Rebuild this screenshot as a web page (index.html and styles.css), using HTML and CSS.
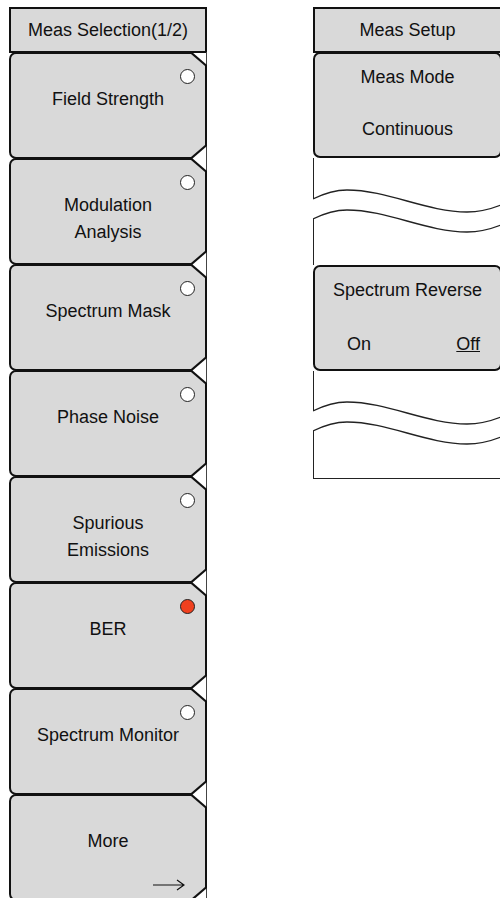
FILE: index.html
```html
<!DOCTYPE html>
<html lang="en">
<head>
    <meta charset="UTF-8">
    <meta name="viewport" content="width=device-width, initial-scale=1.0">
    <title>Meas Selection</title>
    <link rel="stylesheet" href="styles.css">
</head>
<body>
    <div class="screen">
        <div class="panel panel-left">
            <div class="menu-title">Meas Selection(1/2)</div>
            <div class="keys">
                <div class="key"><div class="key-face">Field Strength<span class="led"></span></div></div>
                <div class="key"><div class="key-face">Modulation<br>Analysis<span class="led"></span></div></div>
                <div class="key"><div class="key-face">Spectrum Mask<span class="led"></span></div></div>
                <div class="key"><div class="key-face">Phase Noise<span class="led"></span></div></div>
                <div class="key"><div class="key-face">Spurious<br>Emissions<span class="led"></span></div></div>
                <div class="key"><div class="key-face">BER<span class="led led-on"></span></div></div>
                <div class="key"><div class="key-face">Spectrum Monitor<span class="led"></span></div></div>
                <div class="key"><div class="key-face key-more">More
                    <svg class="more-arrow" width="32" height="12" viewBox="0 0 32 12">
                        <path d="M0 6H31M24 1L31 6L24 11" fill="none" stroke="#111" stroke-width="1.2"/>
                    </svg>
                </div></div>
            </div>
        </div>

        <div class="panel panel-right">
            <div class="menu-title">Meas Setup</div>
            <div class="setup-key setup-first">
                <div class="setup-label">Meas Mode</div>
                <div class="setup-value">Continuous</div>
            </div>
            <div class="gap-break">
                <svg width="188" height="107" viewBox="0 0 188 107">
                    <path d="M0.5 0V41M0.5 61V107" fill="none" stroke="#222" stroke-width="1"/>
                    <path d="M0 41C12 35 22 32 34 32C74 32 114 54 154 54C166 54 178 51 188 47" fill="none" stroke="#222" stroke-width="1.3"/>
                    <path d="M0 61C12 55 22 52 34 52C74 52 114 74 154 74C166 74 178 71 188 67" fill="none" stroke="#222" stroke-width="1.3"/>
                </svg>
            </div>
            <div class="setup-key">
                <div class="setup-label">Spectrum Reverse</div>
                <div class="setup-toggle">
                    <span>On</span>
                    <span class="selected">Off</span>
                </div>
            </div>
            <div class="gap-break gap-last">
                <svg width="188" height="107" viewBox="0 0 188 107">
                    <path d="M0.5 0V40M0.5 60V107" fill="none" stroke="#222" stroke-width="1"/>
                    <path d="M0 40C12 34 22 31 34 31C74 31 114 53 154 53C166 53 178 50 188 46" fill="none" stroke="#222" stroke-width="1.3"/>
                    <path d="M0 60C12 54 22 51 34 51C74 51 114 73 154 73C166 73 178 70 188 66" fill="none" stroke="#222" stroke-width="1.3"/>
                </svg>
            </div>
        </div>
    </div>
</body>
</html>
```

FILE: styles.css
```css
html, body {
    margin: 0;
    background-color: #ffffff;
    overflow: hidden;
}
body {
    font-family: "Liberation Sans", Arial, sans-serif;
    font-size: 18px;
    color: #111111;
}
.screen {
    display: flex;
    align-items: flex-start;
    gap: 106px;
    padding: 7px 0 0 9px;
}
.panel-left {
    width: 198px;
    flex-shrink: 0;
}
.panel-right {
    width: 189px;
    flex-shrink: 0;
}
.menu-title {
    box-sizing: border-box;
    height: 46px;
    border: 2px solid #111;
    background-color: #d9d9d9;
    display: flex;
    align-items: center;
    justify-content: center;
    white-space: nowrap;
}
.keys {
    border-right: 1px solid #444;
    margin-top: -1px;
}
.key {
    box-sizing: border-box;
    height: 107px;
    margin-top: -1px;
    margin-right: -1px;
    padding: 2px;
    background-color: #111;
    border-radius: 7px 0 0 7px;
    clip-path: polygon(0 0, calc(100% - 15px) 0, 100% 13px, 100% calc(100% - 13px), calc(100% - 15px) 100%, 0 100%);
}
.key:first-child {
    margin-top: 0;
}
.key-face {
    position: relative;
    box-sizing: border-box;
    height: 100%;
    padding-top: 32px;
    background-color: #d9d9d9;
    border-radius: 5px 0 0 5px;
    clip-path: polygon(0 0, calc(100% - 14px) 0, 100% 12px, 100% calc(100% - 12px), calc(100% - 14px) 100%, 0 100%);
    text-align: center;
    line-height: 27px;
}
.led {
    position: absolute;
    top: 15px;
    right: 10px;
    width: 13px;
    height: 13px;
    border: 1.2px solid #222;
    border-radius: 50%;
    background-color: #ffffff;
}
.led-on {
    background-color: #f0401e;
}
.key-more {
    display: flex;
    flex-direction: column;
    align-items: center;
}
.more-arrow {
    display: block;
    margin-top: auto;
    margin-bottom: 8px;
    margin-right: 20px;
    align-self: flex-end;
}
.setup-key {
    box-sizing: border-box;
    height: 106px;
    border: 2px solid #111;
    border-radius: 7px;
    background-color: #d9d9d9;
    text-align: center;
    line-height: 27px;
}
.setup-first {
    margin-top: -1px;
}
.setup-label {
    padding-top: 10px;
}
.setup-value {
    margin-top: 25px;
}
.setup-toggle {
    display: flex;
    justify-content: space-between;
    margin-top: 27px;
    padding: 0 20px 0 32px;
}
.selected {
    text-decoration: underline;
}
.gap-break {
    height: 107px;
}
.gap-break svg {
    display: block;
}
.gap-last {
    border-bottom: 1px solid #222;
}
```
